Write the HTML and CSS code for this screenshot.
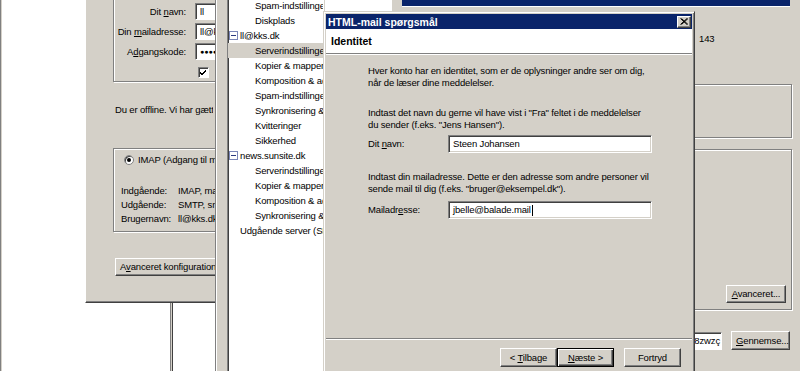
FILE: index.html
```html
<!DOCTYPE html>
<html lang="da">
<head>
<meta charset="utf-8">
<title>HTML-mail spørgsmål</title>
<link rel="stylesheet" href="styles.css">
</head>
<body>
<div class="desk">
  <div class="edge"></div>
  <div class="vline"></div>

  <div class="win wiz">
    <div class="group g1">
      <div class="frow"><span class="flabel">Dit <u>n</u>avn:</span><span class="fin">ll</span></div>
      <div class="frow"><span class="flabel">Din <u>m</u>ailadresse:</span><span class="fin">ll@kks.dk</span></div>
      <div class="frow"><span class="flabel">A<u>d</u>gangskode:</span><span class="fin pw">●●●●●●</span></div>
      <div class="frow"><span class="flabel"></span><span class="chk"><svg width="7" height="7" viewBox="0 0 7 7"><path d="M0 3 L2 5 L6 1 M0 4 L2 6 L6 2" stroke="#000" stroke-width="1" fill="none"/></svg></span></div>
    </div>
    <p class="offline">Du er offline. Vi har gættet</p>
    <div class="group g2">
      <div class="radio-row"><span class="radio"></span>IMAP (Adgang til m</div>
      <div class="info">
        <span>Indgående:</span><span>IMAP, ma</span>
        <span>Udgående:</span><span>SMTP, sm</span>
        <span>Brugernavn:</span><span>ll@kks.dk</span>
      </div>
    </div>
    <button class="btn adv">A<u>v</u>anceret konfiguration</button>
  </div>

  <div class="win acct">
    <ul class="tree">
      <li class="c">Spam-indstillinger</li>
      <li class="c">Diskplads</li>
      <li class="p"><i class="tog"></i>ll@kks.dk</li>
      <li class="c sel">Serverindstillinger</li>
      <li class="c">Kopier &amp; mapper</li>
      <li class="c">Komposition &amp; ad</li>
      <li class="c">Spam-indstillinger</li>
      <li class="c">Synkronisering &amp;</li>
      <li class="c">Kvitteringer</li>
      <li class="c">Sikkerhed</li>
      <li class="p"><i class="tog"></i>news.sunsite.dk</li>
      <li class="c">Serverindstillinger</li>
      <li class="c">Kopier &amp; mapper</li>
      <li class="c">Komposition &amp; ad</li>
      <li class="c">Synkronisering &amp;</li>
      <li class="s">Udgående server (SM</li>
    </ul>
    <div class="pane">
      <div class="ptop"><div class="pwhite"></div><div class="pnavy"></div></div>
      <div class="port">143</div>
      <div class="gb gb1"></div>
      <div class="gb gb2"><button class="btn badv"><u>A</u>vanceret...</button></div>
      <div class="dirrow"><span class="field"><span>8zwzç</span></span><button class="btn bbrowse"><u>G</u>ennemse...</button></div>
    </div>
  </div>

  <div class="win dlg">
    <div class="titlebar"><span>HTML-mail spørgsmål</span><span class="close"><svg width="8" height="7" viewBox="0 0 8 7"><path d="M0.5 0.5 L7 6.5 M1.5 0.5 L8 6.5 M7 0.5 L0.5 6.5 M8 0.5 L1.5 6.5" stroke="#000" stroke-width="1" fill="none"/></svg></span></div>
    <div class="dhead">Identitet</div>
    <div class="dbody">
      <p class="para p1">Hver konto har en identitet, som er de oplysninger andre ser om dig,<br>når de læser dine meddelelser.</p>
      <p class="para p2">Indtast det navn du gerne vil have vist i "Fra" feltet i de meddelelser<br>du sender (f.eks. "Jens Hansen").</p>
      <div class="drow r1"><span class="dlabel">Dit <u>n</u>avn:</span><span class="dinput">Steen Johansen</span></div>
      <p class="para p3">Indtast din mailadresse. Dette er den adresse som andre personer vil<br>sende mail til dig (f.eks. "bruger@eksempel.dk").</p>
      <div class="drow r2"><span class="dlabel">Mailadr<u>e</u>sse:</span><span class="dinput">jbelle@balade.mail<i class="caret"></i></span></div>
    </div>
    <div class="dfoot">
      <button class="btn fbtn">&lt; <u>T</u>ilbage</button><button class="btn fbtn def"><u>N</u>æste &gt;</button><button class="btn fbtn cancel">Fortryd</button>
    </div>
  </div>
</div>
</body>
</html>
```
FILE: styles.css
```css
*{box-sizing:border-box;margin:0;padding:0}
html,body{margin:0;background:#fff}
body{font-family:"Liberation Sans",Arial,sans-serif;font-size:9.5px;letter-spacing:-0.15px;color:#000;line-height:12px}
u{text-decoration:underline;text-underline-offset:1px}
.desk{position:relative;width:800px;height:371px;overflow:hidden;background:#fff}
.edge{position:absolute;left:0;top:0;width:3px;height:371px;background:#d4d0c8;border-left:1px solid #808080;border-right:1px solid #fff}
.vline{position:absolute;left:170px;top:290px;width:3px;height:90px;background:#d4d0c8;border-left:1px solid #808080;border-right:1px solid #404040}
.win{position:absolute;background:#d4d0c8}

.btn{font:inherit;letter-spacing:inherit;background:#d4d0c8;border:1px solid;border-color:#fff #404040 #404040 #fff;box-shadow:inset -1px -1px 0 #808080;height:18px;padding:0 4px;color:#000;display:inline-block;text-align:center;line-height:16px;white-space:nowrap;vertical-align:top}

/* left wizard window (right part hidden under the account window) */
.wiz{left:85px;top:-30px;width:130px;height:333px;overflow:hidden;border-left:1px solid #fff;border-bottom:1px solid #404040;box-shadow:inset 0 -1px 0 #808080;padding-left:27px}
.group{border:1px solid #808080;box-shadow:inset 1px 1px 0 #fff,1px 1px 0 #fff;width:120px}
.g1{margin-top:5px;height:107px;padding-top:27px}
.frow{display:grid;grid-template-columns:72px 40px;column-gap:9px;height:17px;margin-bottom:3px;align-items:center}
.flabel{text-align:right;white-space:nowrap}
.fin{height:17px;background:#fff;border:1px solid;border-color:#808080 #fff #fff #808080;box-shadow:inset 1px 1px 0 #404040;padding-left:4px;line-height:15px;white-space:nowrap;overflow:hidden}
.pw{font-size:7px;letter-spacing:0}
.chk{width:11px;height:11px;margin:2px 0 0 3px;background:#fff;border:1px solid;border-color:#808080 #fff #fff #808080;box-shadow:inset 1px 1px 0 #404040;display:flex;align-items:center;justify-content:center}
.offline{margin-top:22px;padding-left:2px;white-space:nowrap;overflow:hidden;width:100px}
.g2{margin-top:32px;height:84px;padding:4px 0 0 10px}
.radio-row{display:flex;align-items:center;gap:4px;height:14px;white-space:nowrap;overflow:hidden}
.radio{width:10px;height:10px;flex:none;border-radius:50%;background:#fff;border:1px solid #808080;box-shadow:inset 1px 1px 0 #404040;display:flex;align-items:center;justify-content:center}
.radio::after{content:"";width:4px;height:4px;border-radius:50%;background:#000}
.info{margin:17px 0 0 -3px;display:grid;grid-template-columns:57px 38px;line-height:14px;white-space:nowrap;overflow:hidden}
.info span{overflow:hidden}
.adv{margin:26px 0 0 2px;width:112px;text-align:left;padding-left:4px;overflow:hidden}

/* account settings window */
.acct{left:215px;top:-40px;width:600px;height:430px;display:flex;align-items:flex-start;padding-left:11px;border-left:1px solid #808080;box-shadow:inset 1px 0 0 #fff}
.tree{list-style:none;margin-top:37px;width:97px;height:420px;flex:none;background:#fff;border:1px solid;border-color:#808080 #fff #fff #808080;box-shadow:inset 1px 1px 0 #404040}
.tree li{height:15px;line-height:15px;white-space:nowrap;overflow:hidden}
.tree .c{padding-left:27px}
.tree .p{padding-left:1px;display:flex;align-items:center}
.tree .s{padding-left:12px}
.tree .sel{background:#d4d0c8}
.tog{width:9px;height:9px;margin-right:2px;border:1px solid #7b86b8;background:#fff;display:flex;align-items:center;justify-content:center;flex:none}
.tog::after{content:"";width:5px;height:1px;background:#2a3a80}
.pane{margin-left:1px;padding:40px 9px 0 5px;width:476px;flex:none}
.ptop{display:flex;height:13px;margin-left:-5px}
.pwhite{width:67px;height:12px;background:#fff}
.pnavy{margin-left:10px;width:388px;height:7px;background:#0a246a;border-bottom:1px solid #fff}
.port{margin-top:20px;padding-left:369px;line-height:12px}
.gb{border:1px solid #808080;box-shadow:inset 1px 1px 0 #fff,1px 1px 0 #fff;width:462px}
.gb1{margin-top:39px;height:54px}
.gb2{margin-top:11px;height:161px;display:flex;justify-content:flex-end;align-items:flex-end;padding:0 5px 6px 0}
.badv{width:60px}
.dirrow{margin-top:21px;display:flex;align-items:center;gap:9px;width:462px}
.field{width:392px;height:18px;background:#fff;border:1px solid;border-color:#808080 #fff #fff #808080;box-shadow:inset 1px 1px 0 #404040;display:flex;justify-content:flex-end;overflow:hidden;line-height:16px;white-space:nowrap;padding-right:1px}
.field span{flex:none}
.bbrowse{width:59px;height:19px;line-height:17px}

/* dialog */
.dlg{left:323px;top:11px;width:372px;height:380px;border:1px solid;border-color:#d4d0c8 #404040 #404040 #d4d0c8;box-shadow:inset 1px 1px 0 #fff,inset -1px -1px 0 #808080;padding:2px;display:flex;flex-direction:column}
.titlebar{height:15px;flex:none;background:#0a246a;color:#fff;font-weight:bold;font-size:10.5px;letter-spacing:0;display:flex;align-items:center;justify-content:space-between;padding:0 1px 0 2px;white-space:nowrap}
.close{width:14px;height:12px;background:#d4d0c8;border:1px solid;border-color:#fff #404040 #404040 #fff;box-shadow:inset -1px -1px 0 #808080;display:flex;align-items:center;justify-content:center}
.dhead{height:25px;flex:none;background:#fff;font-weight:bold;font-size:10.5px;letter-spacing:0;padding-left:5px;line-height:24px;border-bottom:1px solid #808080;box-shadow:0 1px 0 #fff}
.dbody{height:284px;flex:none;padding:10.5px 0 0 42px}
.para{line-height:12.5px;white-space:nowrap}
.p2{margin-top:17px}
.p3{margin-top:17.5px}
.drow{display:flex;align-items:center;height:18px}
.r1{margin-top:3.5px}
.r2{margin-top:5.5px}
.dlabel{width:80px;flex:none;white-space:nowrap}
.dinput{width:204px;height:18px;background:#fff;border:1px solid;border-color:#808080 #fff #fff #808080;box-shadow:inset 1px 1px 0 #404040,inset -1px -1px 0 #d4d0c8;padding-left:4px;line-height:16px;white-space:nowrap;display:flex;align-items:center}
.caret{display:inline-block;width:1px;height:11px;background:#000;margin-left:1px}
.dfoot{flex:none;border-top:1px solid #808080;box-shadow:inset 0 1px 0 #fff;padding:9px 11px 0 0;display:flex;justify-content:flex-end;align-items:flex-start}
.fbtn{width:57px;height:19px;line-height:17px}
.def{border:1px solid #000;box-shadow:inset 1px 1px 0 #fff,inset -1px -1px 0 #404040,inset -2px -2px 0 #808080}
.cancel{margin-left:10px}
```
